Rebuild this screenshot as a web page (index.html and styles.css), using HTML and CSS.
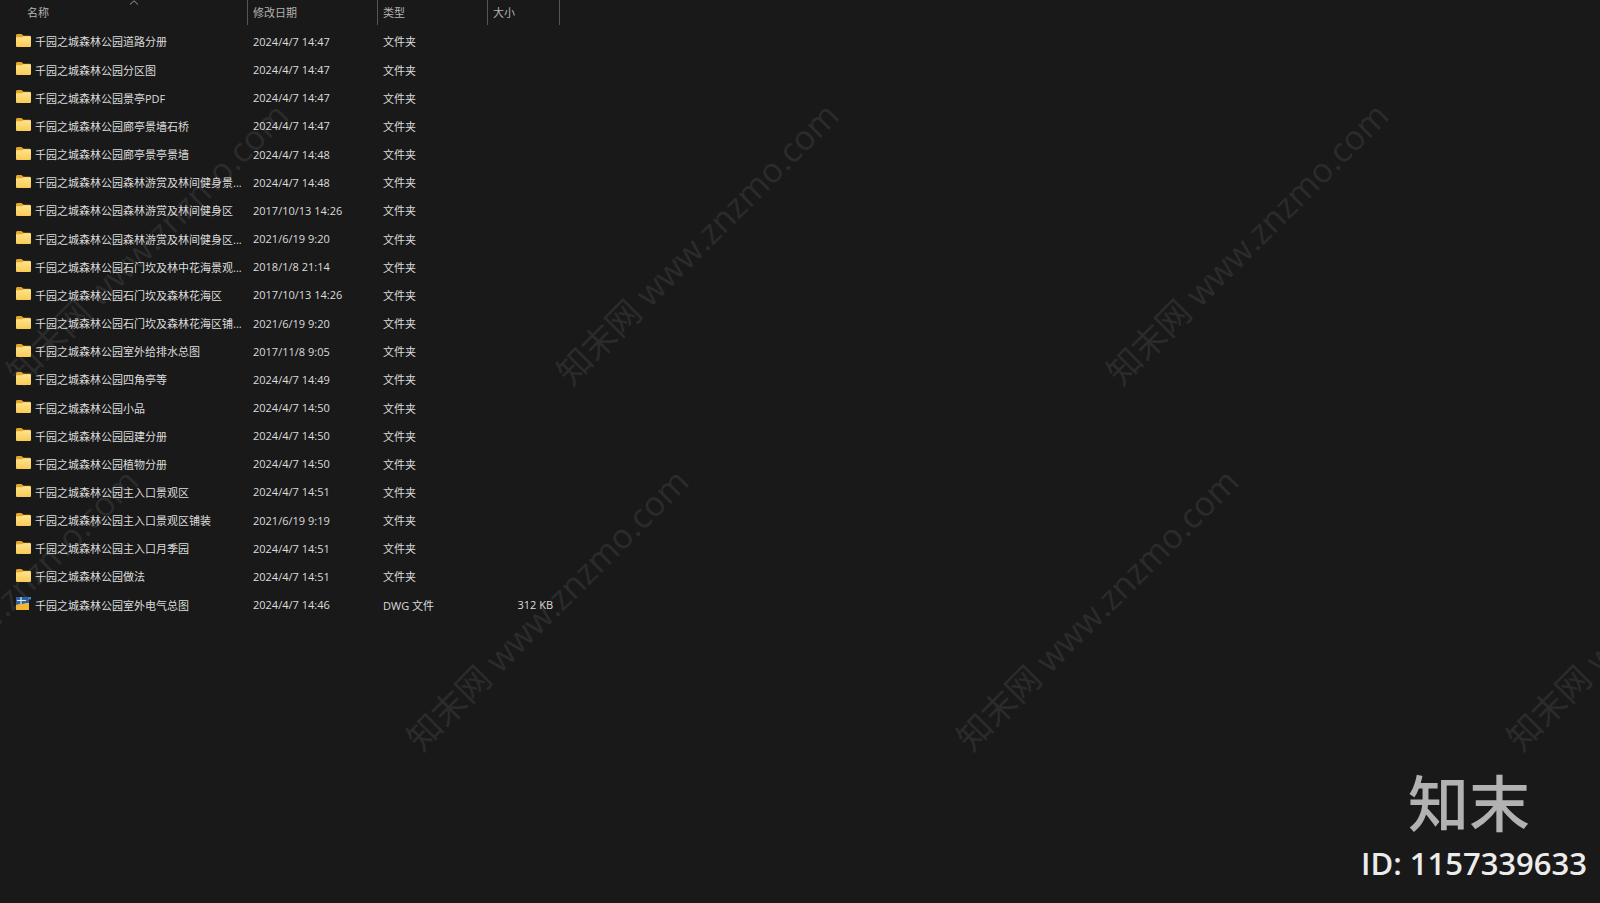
FILE: index.html
```html
<!DOCTYPE html>
<html>
<head>
  <title>千园之城森林公园</title>
  <link rel="stylesheet" href="styles.css">
</head>
<body>

  <svg class="defs" width="0" height="0">
    <defs>
      <linearGradient id="folderFront" x1="0" y1="0" x2="0" y2="1">
        <stop offset="0" stop-color="#ffe48c"/>
        <stop offset="1" stop-color="#f9cb55"/>
      </linearGradient>
      <symbol id="folder" viewBox="0 0 15 13">
        <path d="M0 1.6C0 .7 .6 0 1.5 0H5C5.6 0 6 .3 6.4 .7L7.4 1.7H13.5C14.4 1.7 15 2.3 15 3.2V11.5C15 12.4 14.4 13 13.5 13H1.5C.6 13 0 12.4 0 11.5Z" fill="#e3a52c"/>
        <path d="M0 4.2C0 3.6 .5 3.2 1.1 3.2H6L7.4 2.2H13.5C14.4 2.2 15 2.7 15 3.5V11.5C15 12.4 14.4 13 13.5 13H1.5C.6 13 0 12.4 0 11.5Z" fill="url(#folderFront)"/>
      </symbol>
    </defs>
  </svg>

  <div class="watermarks">
    <span class="mark mark-a">知末网 www.znzmo.com</span>
    <span class="mark mark-b">知末网 www.znzmo.com</span>
    <span class="mark mark-c">知末网 www.znzmo.com</span>
    <span class="mark mark-d">知末网 www.znzmo.com</span>
    <span class="mark mark-e">知末网 www.znzmo.com</span>
    <span class="mark mark-f">知末网 www.znzmo.com</span>
    <span class="mark mark-g">知末网 www.znzmo.com</span>
  </div>

  <div class="list">
    <div class="head">
      <div class="col col-name">名称<svg class="sort" width="10" height="5" viewBox="0 0 10 5"><path d="M1 4.5L5 .8L9 4.5" fill="none" stroke="#9a9a9a"/></svg></div>
      <div class="col">修改日期</div>
      <div class="col">类型</div>
      <div class="col">大小</div>
    </div>

    <div class="row"><div class="name"><svg class="icon"><use href="#folder"/></svg>千园之城森林公园道路分册</div><div>2024/4/7 14:47</div><div>文件夹</div><div></div></div>
    <div class="row"><div class="name"><svg class="icon"><use href="#folder"/></svg>千园之城森林公园分区图</div><div>2024/4/7 14:47</div><div>文件夹</div><div></div></div>
    <div class="row"><div class="name"><svg class="icon"><use href="#folder"/></svg>千园之城森林公园景亭PDF</div><div>2024/4/7 14:47</div><div>文件夹</div><div></div></div>
    <div class="row"><div class="name"><svg class="icon"><use href="#folder"/></svg>千园之城森林公园廊亭景墙石桥</div><div>2024/4/7 14:47</div><div>文件夹</div><div></div></div>
    <div class="row"><div class="name"><svg class="icon"><use href="#folder"/></svg>千园之城森林公园廊亭景亭景墙</div><div>2024/4/7 14:48</div><div>文件夹</div><div></div></div>
    <div class="row"><div class="name"><svg class="icon"><use href="#folder"/></svg>千园之城森林公园森林游赏及林间健身景...</div><div>2024/4/7 14:48</div><div>文件夹</div><div></div></div>
    <div class="row"><div class="name"><svg class="icon"><use href="#folder"/></svg>千园之城森林公园森林游赏及林间健身区</div><div>2017/10/13 14:26</div><div>文件夹</div><div></div></div>
    <div class="row"><div class="name"><svg class="icon"><use href="#folder"/></svg>千园之城森林公园森林游赏及林间健身区...</div><div>2021/6/19 9:20</div><div>文件夹</div><div></div></div>
    <div class="row"><div class="name"><svg class="icon"><use href="#folder"/></svg>千园之城森林公园石门坎及林中花海景观...</div><div>2018/1/8 21:14</div><div>文件夹</div><div></div></div>
    <div class="row"><div class="name"><svg class="icon"><use href="#folder"/></svg>千园之城森林公园石门坎及森林花海区</div><div>2017/10/13 14:26</div><div>文件夹</div><div></div></div>
    <div class="row"><div class="name"><svg class="icon"><use href="#folder"/></svg>千园之城森林公园石门坎及森林花海区铺...</div><div>2021/6/19 9:20</div><div>文件夹</div><div></div></div>
    <div class="row"><div class="name"><svg class="icon"><use href="#folder"/></svg>千园之城森林公园室外给排水总图</div><div>2017/11/8 9:05</div><div>文件夹</div><div></div></div>
    <div class="row"><div class="name"><svg class="icon"><use href="#folder"/></svg>千园之城森林公园四角亭等</div><div>2024/4/7 14:49</div><div>文件夹</div><div></div></div>
    <div class="row"><div class="name"><svg class="icon"><use href="#folder"/></svg>千园之城森林公园小品</div><div>2024/4/7 14:50</div><div>文件夹</div><div></div></div>
    <div class="row"><div class="name"><svg class="icon"><use href="#folder"/></svg>千园之城森林公园园建分册</div><div>2024/4/7 14:50</div><div>文件夹</div><div></div></div>
    <div class="row"><div class="name"><svg class="icon"><use href="#folder"/></svg>千园之城森林公园植物分册</div><div>2024/4/7 14:50</div><div>文件夹</div><div></div></div>
    <div class="row"><div class="name"><svg class="icon"><use href="#folder"/></svg>千园之城森林公园主入口景观区</div><div>2024/4/7 14:51</div><div>文件夹</div><div></div></div>
    <div class="row"><div class="name"><svg class="icon"><use href="#folder"/></svg>千园之城森林公园主入口景观区铺装</div><div>2021/6/19 9:19</div><div>文件夹</div><div></div></div>
    <div class="row"><div class="name"><svg class="icon"><use href="#folder"/></svg>千园之城森林公园主入口月季园</div><div>2024/4/7 14:51</div><div>文件夹</div><div></div></div>
    <div class="row"><div class="name"><svg class="icon"><use href="#folder"/></svg>千园之城森林公园做法</div><div>2024/4/7 14:51</div><div>文件夹</div><div></div></div>
    <div class="row">
      <div class="name">
        <svg class="icon" viewBox="0 0 15 13">
          <rect x="0" y="0" width="13" height="13" fill="#e9e4d2"/>
          <path d="M0 0H13V6L0 8Z" fill="#2f5f9e"/>
          <path d="M0 8L13 6V13H0Z" fill="#f2b632"/>
          <path d="M5 0V7M1 3.5H10" stroke="#dfe8f2" stroke-width="1.2"/>
          <path d="M12 0H15V2.5H12Z" fill="#3f7fc4"/>
        </svg>千园之城森林公园室外电气总图
      </div>
      <div>2024/4/7 14:46</div>
      <div>DWG 文件</div>
      <div class="size">312 KB</div>
    </div>
  </div>

  <div class="brand">
    <div class="brand-logo">知末</div>
    <div class="brand-id">ID: 1157339633</div>
  </div>

</body>
</html>
```

FILE: styles.css
```css
html, body {
  height: 100%;
}
body {
  margin: 0;
  background: #191919;
  color: #dcdcdc;
  font-family: "Open Sans", "Noto Sans CJK SC", sans-serif;
  font-size: 11px;
  overflow: hidden;
  position: relative;
}
.defs {
  position: absolute;
}

/* file list */
.list {
  position: relative;
  width: 560px;
}
.head {
  display: grid;
  grid-template-columns: 248px 130px 110px 72px;
  height: 25px;
  margin-bottom: 2.4px;
  color: #b4b4b4;
}
.col {
  border-right: 1px solid #555;
  padding-left: 5px;
  line-height: 25px;
  box-sizing: border-box;
  position: relative;
}
.col-name {
  padding-left: 27px;
}
.sort {
  position: absolute;
  left: 129px;
  top: 0;
}
.row {
  display: grid;
  grid-template-columns: 248px 130px 110px 72px;
  height: 28.17px;
  align-items: center;
}
.row > div {
  padding-left: 5px;
  white-space: nowrap;
}
.row > .name {
  display: flex;
  align-items: center;
  padding-left: 16px;
}
.icon {
  width: 15px;
  height: 13px;
  margin: 0 4px 2px 0;
  flex: none;
}
.row > .size {
  text-align: right;
  padding-right: 7px;
}

/* watermark */
.watermarks {
  position: absolute;
  inset: 0;
  overflow: hidden;
}
.mark {
  position: absolute;
  width: 460px;
  height: 44px;
  line-height: 44px;
  margin: -22px 0 0 -230px;
  text-align: center;
  white-space: nowrap;
  font-size: 34px;
  color: #2b2b2b;
  transform: rotate(-45deg);
}
.mark-a { left: 147px; top: 243px; }
.mark-b { left: 697px; top: 243px; }
.mark-c { left: 1247px; top: 243px; }
.mark-d { left: -3px; top: 609px; }
.mark-e { left: 547px; top: 609px; }
.mark-f { left: 1097px; top: 609px; }
.mark-g { left: 1647px; top: 609px; }

/* logo corner */
.brand {
  position: absolute;
  right: 13px;
  bottom: 20px;
  display: flex;
  flex-direction: column;
  align-items: center;
}
.brand-logo {
  font-size: 61px;
  line-height: 60px;
  font-weight: 500;
  color: #b2b2b2;
  margin: 0 10px 9px 0;
}
.brand-id {
  font-size: 31px;
  line-height: 40px;
  font-weight: 600;
  color: #ececec;
}
```
